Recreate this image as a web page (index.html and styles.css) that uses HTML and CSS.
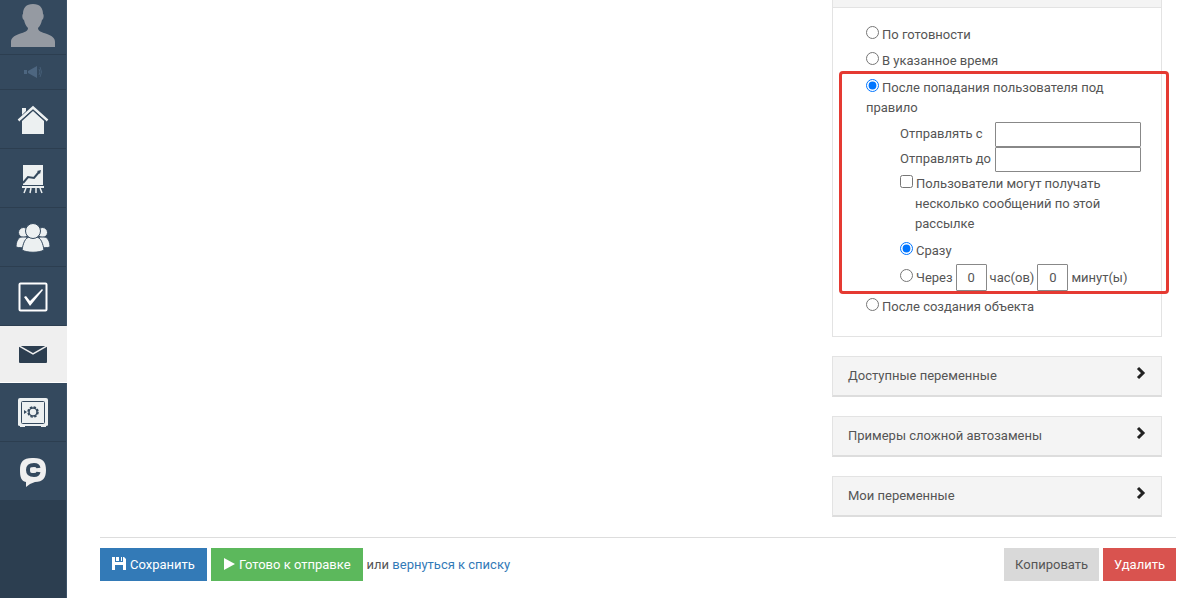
FILE: index.html
```html
<!DOCTYPE html>
<html lang="ru">
<head>
	<meta charset="UTF-8">
	<meta name="viewport" content="width=device-width, initial-scale=1">
	<title>Рассылка</title>
	<link rel="stylesheet" href="styles.css">
</head>
<body>
	<nav class="sidebar">
		<a class="item avatar" href="#" aria-label="Профиль">
			<svg width="46" height="44" viewBox="0 0 46 44"><path fill="#959aa2" d="M1 44v-5c0-4 3-6 8-8 6-2 9-3 9-6-2-2-3-4-4-8-2-1-2-6-1-6 0-6 3-10 10-10s10 4 10 10c1 0 1 5-1 6-1 4-2 6-4 8 0 3 3 4 9 6 5 2 8 4 8 8v5z"/></svg>
		</a>
		<a class="item news" href="#" aria-label="Новости">
			<svg width="20" height="14" viewBox="0 0 20 14"><path fill="#4d6680" d="M1 5h3v4H1zM5 6l9-5v12L5 8z"/><path fill="none" stroke="#455d76" d="M16 4q2 3 0 6M17 2q3 5 0 10"/></svg>
		</a>
		<a class="item" href="#" aria-label="Главная">
			<svg width="32" height="30" viewBox="0 0 32 30"><path fill="#ecf0f1" d="M5 29V16L16 6l11 10v13zM5 3h4v3L5 10z"/><path fill="none" stroke="#ecf0f1" stroke-width="2.5" d="M1.500 15.500L16 2.500l14.500 13"/><path fill="none" stroke="#34495e" d="M3 16.500L16 5l13 11.500"/></svg>
		</a>
		<a class="item" href="#" aria-label="Статистика">
			<svg width="24" height="30" viewBox="0 0 24 30"><path fill="#ecf0f1" d="M2 1h20v20H2zM1 22h22v2H1z"/><path fill="none" stroke="#ecf0f1" stroke-width="1.500" d="M5 24l-2 5M10 24l-1 5M15 24v5M19 24l2 5"/><path fill="none" stroke="#34495e" stroke-width="2" d="M2 19l5-6 6 1 5-6"/><path fill="#34495e" d="M16 7l4-1-1 4z"/></svg>
		</a>
		<a class="item" href="#" aria-label="Пользователи">
			<svg width="34" height="30" viewBox="0 0 34 30"><g fill="#ecf0f1" stroke="#34495e"><circle cx="7.500" cy="9.500" r="5"/><circle cx="26.500" cy="9.500" r="5"/><path d="M0 24c0-5 2-10 6-10h5v10c-4 1-8 1-11 0zM34 24c0-5-2-10-6-10h-5v10c4 1 8 1 11 0z"/><path d="M6 27c1-6 3-13 8-13h6c5 0 7 7 8 13-5 3-17 3-22 0z"/><circle cx="17" cy="8" r="7.500"/></g></svg>
		</a>
		<a class="item" href="#" aria-label="Задачи">
			<svg width="30" height="30" viewBox="0 0 30 30"><rect x="1.500" y="1.500" width="27" height="27" rx="1" fill="none" stroke="#fff" stroke-width="2"/><path fill="#fff" d="M6 15l2-1 4 5 12-12 1 1-13 16z"/></svg>
		</a>
		<a class="item active" href="#" aria-label="Рассылки">
			<svg width="28" height="18" viewBox="0 0 28 18"><rect y="1" width="28" height="17" rx="1" fill="#2c3e50"/><path fill="none" stroke="#efefef" stroke-width="1.500" d="M0 1l14 8 14-8"/></svg>
		</a>
		<a class="item" href="#" aria-label="Сейф">
			<svg width="30" height="30" viewBox="0 0 30 30"><path fill="#ecf0f1" d="M2 0h26q2 0 2 2v25q0 1-2 1v1h-5v-1H7v1H2v-1q-2 0-2-1V2q0-2 2-2z"/><rect x="3.500" y="3.500" width="23" height="22" rx="1" fill="none" stroke="#34495e"/><circle cx="15" cy="14" r="4" fill="none" stroke="#34495e" stroke-width="1.500"/><circle cx="15" cy="14" r="5" fill="none" stroke="#34495e" stroke-width="1.500" stroke-dasharray="2.500 1.430"/><path fill="#34495e" d="M6 12l3 2-3 2z"/></svg>
		</a>
		<a class="item" href="#" aria-label="Чат">
			<svg width="28" height="30" viewBox="0 0 28 30"><path fill="#efefef" d="M13 1h2c9 0 12 4 12 12s-3 12-11 12l-5 2-4 3v-5C2 24 1 20 1 13 1 5 4 1 13 1z"/><path fill="none" stroke="#34495e" stroke-width="4" d="M19.500 11c-.3-2-1.500-3-4.500-3-4.500 0-6 1-6 5s1.500 5 6 5c3 0 4.200-1 4.500-3"/></svg>
		</a>
	</nav>

	<main class="page">
		<div class="content">
			<aside class="options">
				<section class="panel">
					<div class="panel-top"></div>
					<form class="panel-body">
						<label class="choice"><input type="radio" name="when">По готовности</label>
						<label class="choice"><input type="radio" name="when">В указанное время</label>
						<div class="rule">
							<label class="choice"><input type="radio" name="when" checked>После попадания пользователя под правило</label>
							<div class="rule-options">
								<div class="field">
									<label for="send-from">Отправлять с</label>
									<input type="text" id="send-from">
								</div>
								<div class="field">
									<label for="send-to">Отправлять до</label>
									<input type="text" id="send-to">
								</div>
								<label class="choice repeat"><input type="checkbox">Пользователи могут получать несколько сообщений по этой рассылке</label>
								<label class="choice"><input type="radio" name="delay" checked>Сразу</label>
								<div class="delay">
									<label><input type="radio" name="delay">Через</label>
									<input type="text" id="hours" value="0">
									<label for="hours">час(ов)</label>
									<input type="text" id="minutes" value="0">
									<label for="minutes">минут(ы)</label>
								</div>
							</div>
						</div>
						<label class="choice"><input type="radio" name="when">После создания объекта</label>
					</form>
				</section>
				<button type="button" class="toggle">Доступные переменные
					<svg width="10" height="14" viewBox="0 0 10 14"><path d="M2 2l5 5-5 5"/></svg>
				</button>
				<button type="button" class="toggle">Примеры сложной автозамены
					<svg width="10" height="14" viewBox="0 0 10 14"><path d="M2 2l5 5-5 5"/></svg>
				</button>
				<button type="button" class="toggle">Мои переменные
					<svg width="10" height="14" viewBox="0 0 10 14"><path d="M2 2l5 5-5 5"/></svg>
				</button>
			</aside>
		</div>

		<footer class="actions">
			<button type="button" class="btn save">
				<svg width="14" height="16" viewBox="0 0 14 16"><path fill="#fff" d="M0 0h3v5h8V0h1l2 2v11h-3V8H3v5H0zM4 0h3v4H4zM9 0h1v4H9z"/></svg>
				Сохранить
			</button>
			<button type="button" class="btn ready">
				<svg width="12" height="16" viewBox="0 0 12 16"><path fill="#fff" d="M1 1l11 6-11 6z"/></svg>
				Готово к отправке
			</button>
			<span>или <a href="#">вернуться к списку</a></span>
			<button type="button" class="btn copy">Копировать</button>
			<button type="button" class="btn delete">Удалить</button>
		</footer>
	</main>
</body>
</html>
```
FILE: styles.css
```css
* {
	box-sizing: border-box;
}
body {
	display: flex;
	min-height: 100vh;
	margin: 0;
	background-color: #fff;
	color: #555;
	font-family: Roboto, "Liberation Sans", sans-serif;
	font-size: 13px;
	line-height: 20px;
}
input, button {
	font: inherit;
	color: inherit;
}
a {
	color: #337ab7;
	text-decoration: none;
}

/* sidebar */
.sidebar {
	flex: none;
	width: 67px;
	background-color: #2c3e50;
	border-right: 1px solid #3d5369;
}
.item {
	display: flex;
	align-items: center;
	justify-content: center;
	height: 59px;
	padding-top: 2px;
	background-color: #34495e;
	border-bottom: 1px solid #2c3e50;
}
.item.avatar {
	height: 55px;
	padding: 0 0 4px;
}
.item.news {
	height: 35px;
	padding: 0;
}
.item.active {
	height: 57px;
	margin-right: -1px;
	padding: 0 2px 0 0;
	background-color: #efefef;
	border-bottom-color: #fff;
}

/* page */
.page {
	flex: 1;
	padding: 0 24px 16px 33px;
}
.content {
	display: flex;
	justify-content: flex-end;
	padding: 0 14px 20px 0;
	border-bottom: 1px solid #ddd;
}
.options {
	display: flex;
	flex-direction: column;
	gap: 19px;
	width: 330px;
}
.panel {
	border: 1px solid #e3e3e3;
	border-top: 0;
}
.panel-top {
	height: 8px;
	background-color: #f4f4f4;
	border-bottom: 1px solid #e3e3e3;
}
.panel-body {
	display: flex;
	flex-direction: column;
	gap: 6px;
	padding: 17px 20px 19px 33px;
}
.choice {
	display: block;
}
input[type="radio"], input[type="checkbox"] {
	width: 13px;
	height: 13px;
	margin: 0 3px 0 0;
}
input[type="text"] {
	min-width: 0;
	border: 1px solid #888;
	border-radius: 1px;
	background-color: #fff;
}

/* highlighted rule */
.rule {
	position: relative;
	padding-top: 1px;
}
.rule::after {
	content: "";
	position: absolute;
	inset: -6px -28px -3px -27px;
	border: 3px solid #e53a32;
	border-radius: 4px;
	pointer-events: none;
}
.rule-options {
	padding: 4px 0 0 34px;
}
.field {
	display: flex;
}
.field label {
	width: 95px;
	padding-top: 2px;
}
.field input {
	flex: 1;
	height: 25px;
}
.repeat {
	padding: 2px 0 7px 15px;
	text-indent: -15px;
}
.delay {
	display: flex;
	align-items: center;
	gap: 3px;
	padding-top: 3px;
}
.delay input[type="text"] {
	width: 31px;
	height: 27px;
	text-align: center;
}

.toggle {
	display: flex;
	align-items: center;
	justify-content: space-between;
	height: 41px;
	padding: 0 15px 1px;
	background-color: #f4f4f4;
	border: 1px solid #e3e3e3;
	border-bottom: 2px solid #ddd;
	text-align: left;
}
.toggle svg {
	margin-bottom: 6px;
	fill: none;
	stroke: #222;
	stroke-width: 3;
}

/* bottom buttons */
.actions {
	display: flex;
	align-items: center;
	gap: 4px;
	padding-top: 10px;
}
.btn {
	display: flex;
	align-items: center;
	gap: 4px;
	height: 33px;
	padding: 0 12px;
	border: 0;
	color: #fff;
}
.save {
	background-color: #337ab7;
}
.ready {
	background-color: #5cb85c;
}
.copy, .delete {
	padding: 0 11px;
}
.copy {
	margin-left: auto;
	background-color: #d9d9d9;
	color: #555;
}
.delete {
	background-color: #d9534f;
}
```
